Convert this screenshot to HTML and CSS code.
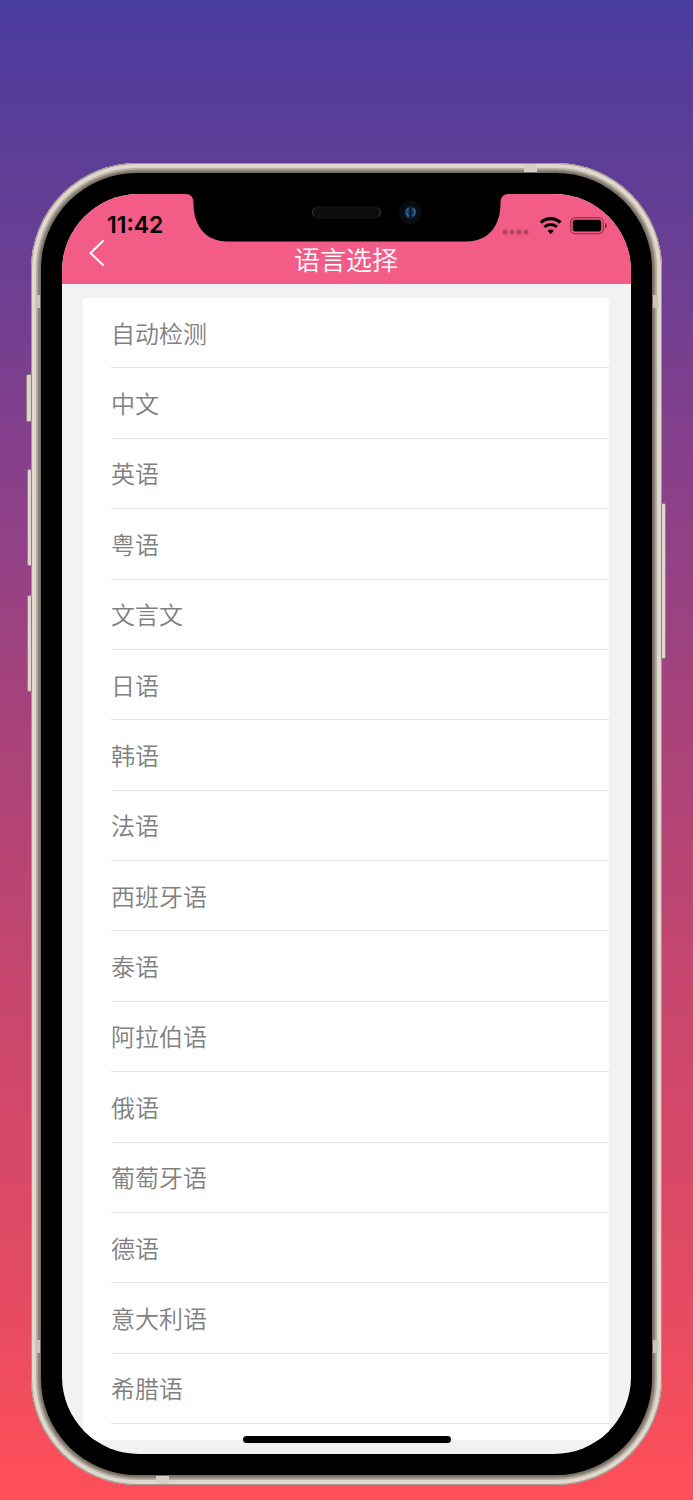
FILE: index.html
```html
<!DOCTYPE html>
<html lang="zh-CN">
<head>
<meta charset="utf-8">
<meta name="viewport" content="width=device-width, initial-scale=1">
<title>语言选择</title>
<link rel="stylesheet" href="styles.css">
</head>
<body>
<main class="phone">
  <span class="key key-mute"></span>
  <span class="key key-up"></span>
  <span class="key key-down"></span>
  <span class="key key-power"></span>
  <span class="band band-top"></span>
  <span class="band band-bottom"></span>
  <span class="band band-side band-left band-high"></span>
  <span class="band band-side band-right band-high"></span>
  <span class="band band-side band-left band-low"></span>
  <span class="band band-side band-right band-low"></span>
  <div class="bezel">
    <div class="screen">
      <header class="header">
        <div class="status">
          <time class="clock">11:42</time>
          <svg class="indicators" width="106" height="20" viewBox="0 0 106 20" aria-hidden="true">
            <g fill="#000" opacity=".25">
              <circle cx="4" cy="16" r="2.6"/><circle cx="11" cy="16" r="2.6"/><circle cx="18" cy="16" r="2.6"/><circle cx="25" cy="16" r="2.6"/>
            </g>
            <g fill="none" stroke="#000" stroke-width="3">
              <path d="M39.800 6.600a14 14 0 0 1 19.700 0" stroke-width="3.200"/>
              <path d="M43.400 10.900a9.300 9.300 0 0 1 12.500 0" stroke-width="3.200"/>
            </g>
            <path d="M49.650 18.200 46.500 14.800a4.700 4.700 0 0 1 6.300 0z" fill="#000"/>
            <rect x="69.700" y="1.700" width="32.600" height="16" rx="4.500" fill="none" stroke="#000" stroke-opacity=".4" stroke-width="1.300"/>
            <rect x="71.800" y="3.800" width="28.400" height="11.800" rx="2.500" fill="#000"/>
            <path d="M104 7v5.400q1.900-.7 1.900-2.700t-1.900-2.700z" fill="#000" fill-opacity=".5"/>
          </svg>
        </div>
        <div class="nav">
          <button class="back" type="button" aria-label="返回">
            <svg width="16" height="28" viewBox="0 0 16 28" aria-hidden="true"><path d="M14 2 1.500 14 14 26" fill="none" stroke="#fff" stroke-width="1.900" stroke-linecap="round"/></svg>
          </button>
          <h1 class="title">语言选择</h1>
        </div>
        <svg class="notch" width="323" height="48" viewBox="0 0 323 48" aria-hidden="true">
          <defs>
            <radialGradient id="lens"><stop offset="0" stop-color="#18204a"/><stop offset=".55" stop-color="#1d4468"/><stop offset="1" stop-color="#0a1420"/></radialGradient>
          </defs>
          <path d="M0 0Q8 0 8 9C8 33 21 47.500 42 47.500H281C302 47.500 315 33 315 9Q315 0 323 0z"/>
          <rect x="126.500" y="13" width="69" height="11" rx="5.500" fill="#0e0e0e" stroke="#161616"/>
          <path d="M128.500 14.500q-3 4 0 8M193.500 14.500q3 4 0 8" fill="none" stroke="#333"/>
          <circle cx="225" cy="18.500" r="11.500" fill="#080c11"/>
          <circle cx="225" cy="18.500" r="6.500" fill="url(#lens)"/>
          <path d="M223 14q-4 4 0 9M227.500 14q4 4 0 8" fill="none" stroke="#2f6496" stroke-width="1.500"/>
          <path d="M225 13v11" stroke="#080a14" stroke-width="1.500"/>
        </svg>
      </header>
      <div class="content">
        <ul class="languages">
          <li><button type="button">自动检测</button></li>
          <li><button type="button">中文</button></li>
          <li><button type="button">英语</button></li>
          <li><button type="button">粤语</button></li>
          <li><button type="button">文言文</button></li>
          <li><button type="button">日语</button></li>
          <li><button type="button">韩语</button></li>
          <li><button type="button">法语</button></li>
          <li><button type="button">西班牙语</button></li>
          <li><button type="button">泰语</button></li>
          <li><button type="button">阿拉伯语</button></li>
          <li><button type="button">俄语</button></li>
          <li><button type="button">葡萄牙语</button></li>
          <li><button type="button">德语</button></li>
          <li><button type="button">意大利语</button></li>
          <li><button type="button">希腊语</button></li>
        </ul>
      </div>
      <span class="home"></span>
    </div>
  </div>
</main>
</body>
</html>
```
FILE: styles.css
```css
* { box-sizing: border-box; }

body {
  margin: 0;
  padding: 163px 31px 15px;
  background: linear-gradient(#4a3c9e 0%, #623e96 13%, #8b4089 33%, #a4427c 46%, #c9466d 67%, #e54b62 87%, #fc4f5a 98%);
  font-family: "Noto Sans CJK SC", sans-serif;
}

button {
  padding: 0;
  border: 0;
  background: none;
  color: inherit;
  font: inherit;
  text-align: left;
}

.phone {
  position: relative;
  padding: 10px;
  border-radius: 106px;
  background: #6f665d;
  box-shadow:
    inset 0 0 0 1px #a1978d,
    inset 0 0 1px 5px #e0d8ce,
    inset 0 0 1px 7px #b3aa9e,
    inset 0 0 2px 9px #8a8175;
}

.bezel {
  padding: 21px;
  border-radius: 96px;
  background: #000;
}

.screen {
  position: relative;
  overflow: hidden;
  border-radius: 77px;
  background: #f2f2f2;
}

/* Side keys */
.key {
  position: absolute;
  left: -4px;
  width: 5px;
  height: 97px;
  border: 1px solid #8f857d;
  border-radius: 2px 0 0 2px;
  background: #ded6cc;
}
.key-mute { top: 211px; left: -5px; width: 6px; height: 48px; }
.key-up { top: 306px; }
.key-down { top: 432px; }
.key-power { top: 340px; right: -4px; left: auto; height: 156px; border-radius: 0 2px 2px 0; }

/* Antenna bands */
.band {
  position: absolute;
  width: 13px;
  height: 8px;
  background: #d6cfc6;
}
.band-top { top: 1px; right: 125px; }
.band-bottom { bottom: 1px; left: 125px; }
.band-side { width: 5px; height: 13px; background: #cbc4ba; }
.band-left { left: 4px; }
.band-right { right: 4px; }
.band-high { top: 132px; }
.band-low { bottom: 132px; }

/* Header */
.header {
  position: relative;
  height: 90px;
  padding-top: 17px;
  background: #f35c87;
}

.status {
  display: flex;
  align-items: center;
  justify-content: space-between;
  height: 29px;
  padding: 0 24px 0 45px;
}

.clock {
  color: #000;
  font: 600 23px/29px Inter, sans-serif;
}

.nav {
  display: grid;
  grid-template-columns: 40px 1fr 41px;
  padding: 0 27px;
}

.back {
  height: 28px;
  margin-top: -1px;
}
.back svg { display: block; }

.title {
  margin: 0;
  color: #fff;
  font-size: 26px;
  font-weight: 350;
  line-height: 38px;
  text-align: center;
}

.notch {
  position: absolute;
  top: 0;
  left: 50%;
  transform: translateX(-50%);
}

/* Language list */
.content { padding: 14px 22px 14px 21px; }

.languages {
  display: grid;
  grid-auto-rows: 1fr;
  min-height: 1142px;
  margin: 0;
  padding: 0 0 16px 28px;
  border-radius: 4px;
  background: #fff;
  list-style: none;
}

.languages li {
  display: grid;
  border-bottom: 1px solid #e6e6e6;
  color: #808080;
  font-size: 24px;
  font-weight: 350;
  line-height: 36px;
}

.home {
  position: absolute;
  bottom: 11px;
  left: 50%;
  width: 208px;
  height: 7px;
  border-radius: 4px;
  background: #000;
  transform: translateX(-50%);
}
```
